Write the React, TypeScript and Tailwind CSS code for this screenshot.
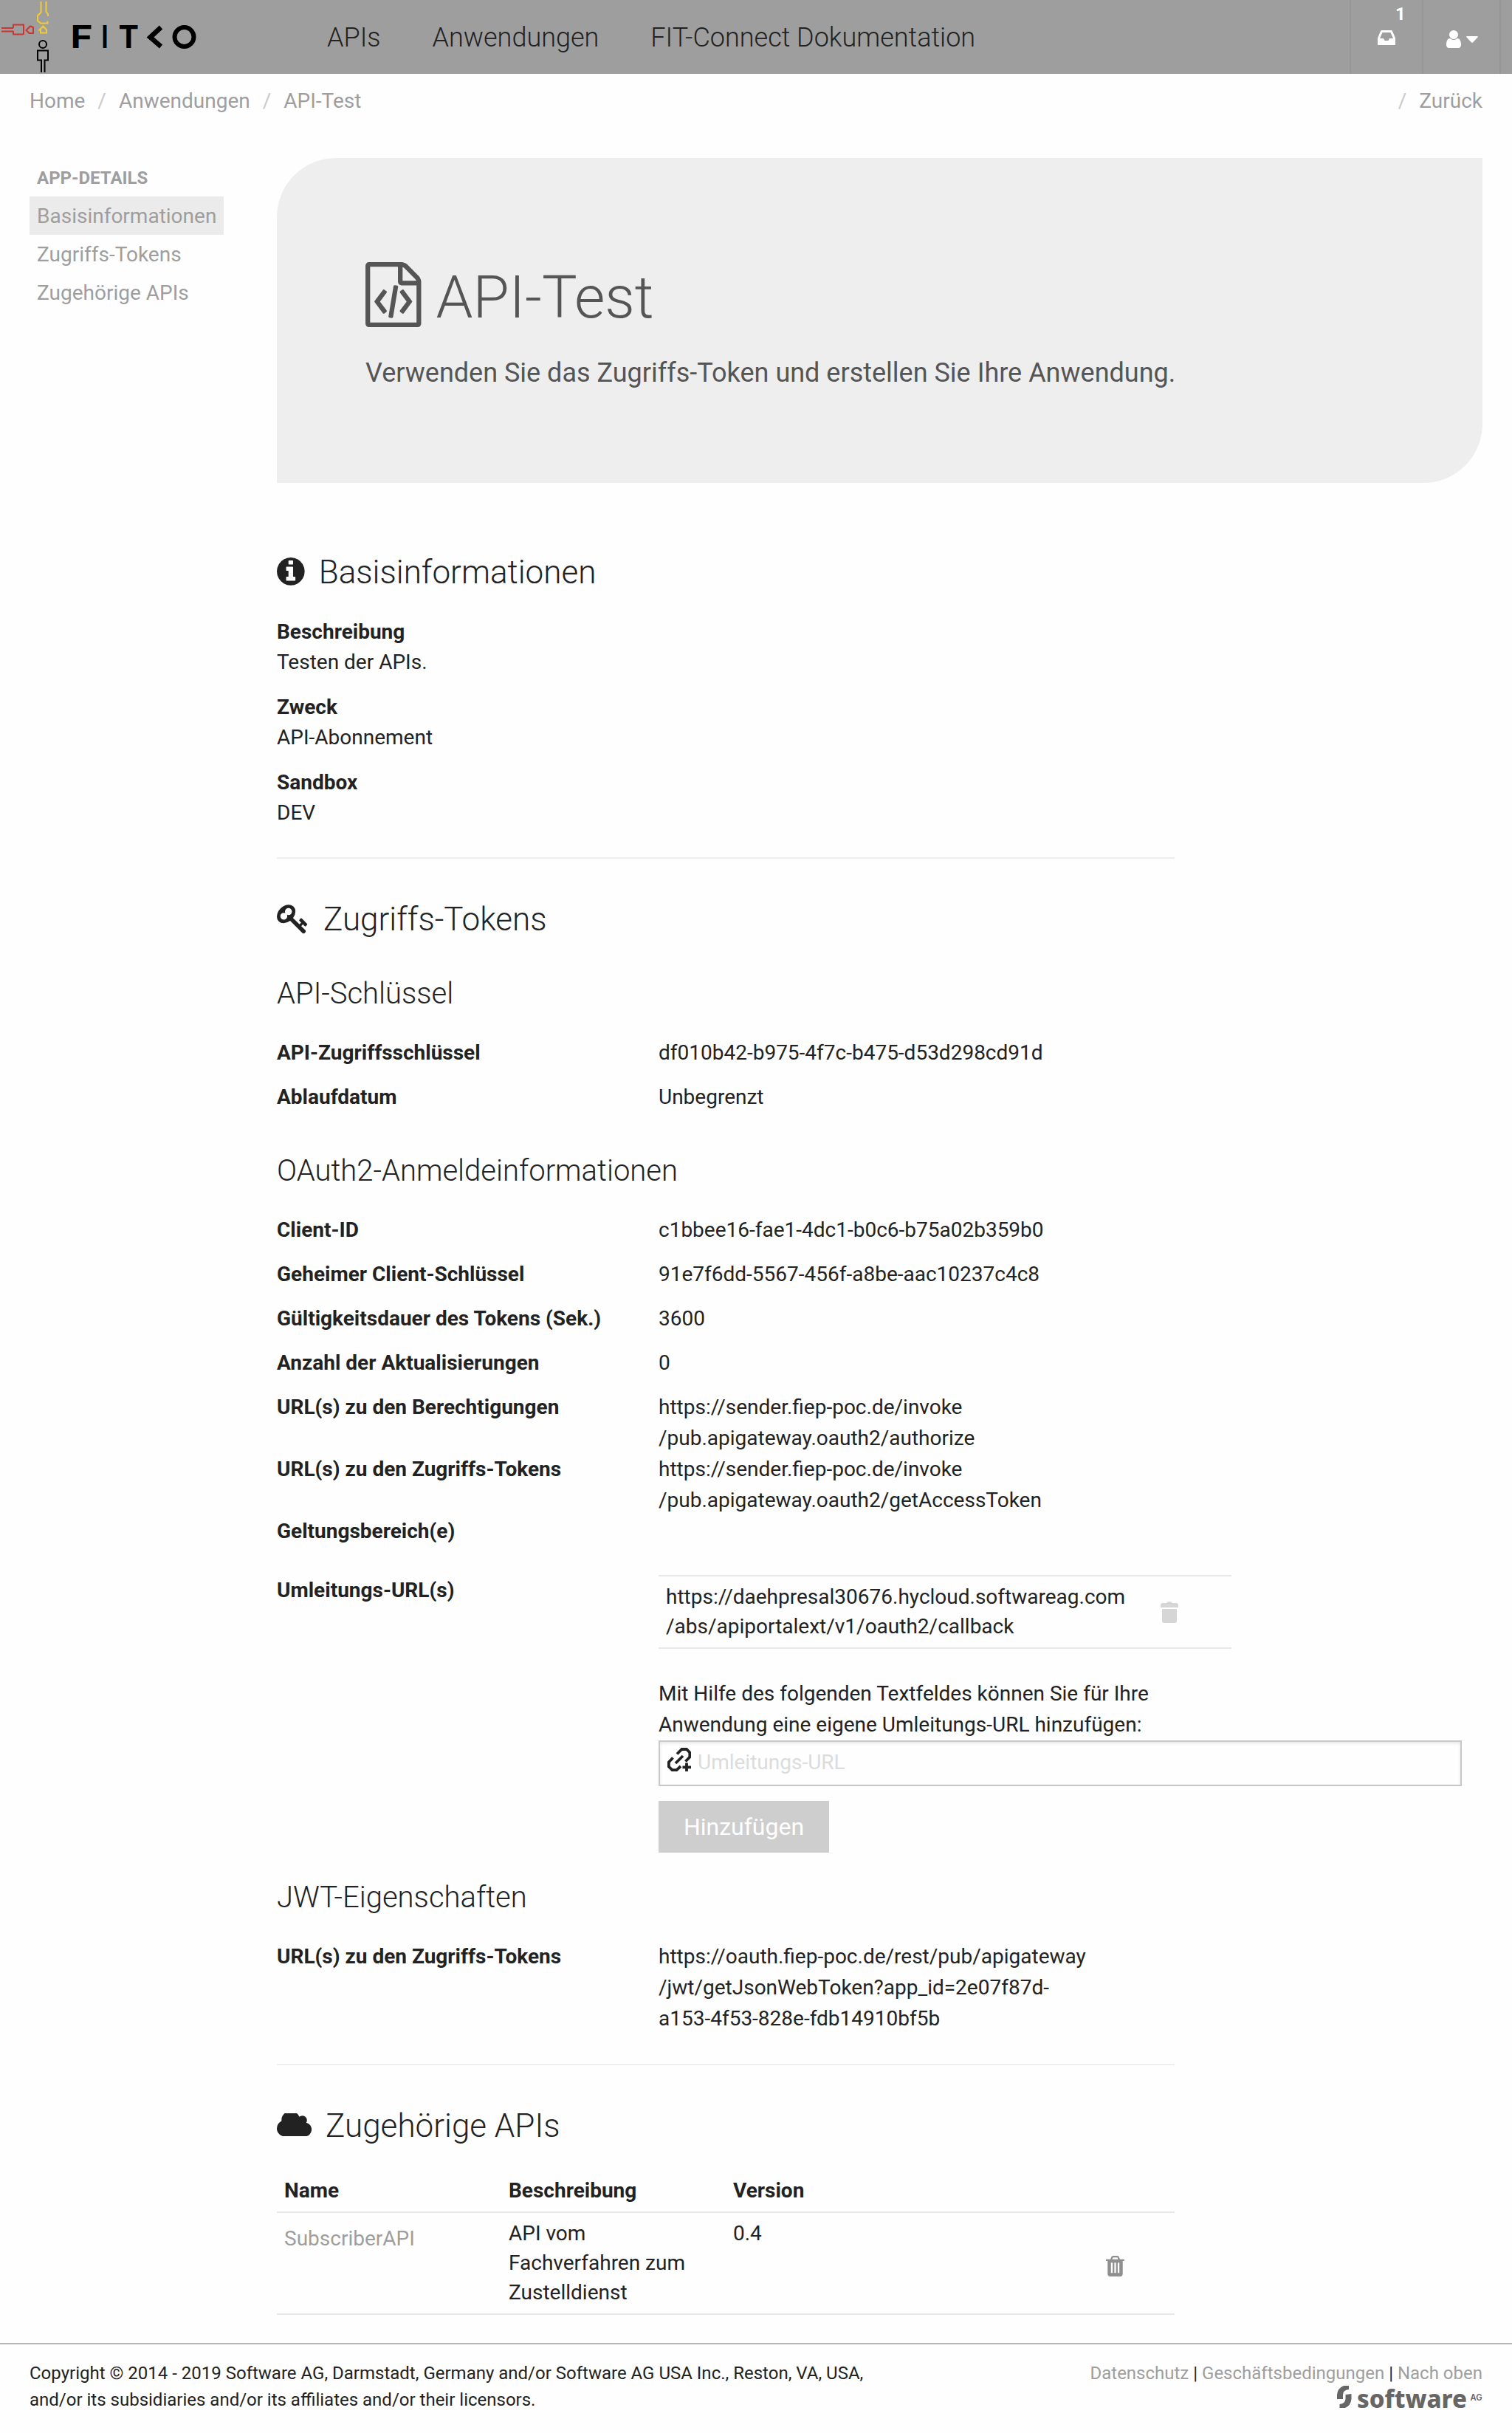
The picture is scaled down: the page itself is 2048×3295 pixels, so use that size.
import type { ReactNode } from "react";

const INFO =
  "M1152 1376v-160q0-14-9-23t-23-9h-96v-512q0-14-9-23t-23-9h-320q-14 0-23 9t-9 23v160q0 14 9 23t23 9h96v320h-96q-14 0-23 9t-9 23v160q0 14 9 23t23 9h448q14 0 23-9t9-23zm-128-896v-160q0-14-9-23t-23-9h-192q-14 0-23 9t-9 23v160q0 14 9 23t23 9h192q14 0 23-9t9-23zm640 416q0 209-103 385.5t-279.5 279.5-385.5 103-385.5-103-279.5-279.5-103-385.5 103-385.5 279.5-279.5 385.5-103 385.5 103 279.5 279.5 103 385.5z";
const KEY =
  "M832 512q0-80-56-136t-136-56-136 56-56 136q0 42 19 83-41-19-83-19-80 0-136 56t-56 136 56 136 136 56 136-56 56-136q0-42-19-83 41 19 83 19 80 0 136-56t56-136zm851 704q0 17-49 66t-66 49q-9 0-28.5-16t-36.5-33-38.5-40-24.5-26l-96 96 220 220q28 28 28 68 0 42-39 81t-81 39q-40 0-68-28l-671-671q-176 131-365 131-163 0-265.5-102.5t-102.5-265.5q0-160 95-313t248-248 313-95q163 0 265.5 102.5t102.5 265.5q0 189-131 365l355 355 96-96q-3-3-26-24.5t-40-38.5-33-36.5-16-28.5q0-17 49-66t66-49q13 0 23 10 6 6 46 44.5t82 79.5 86.5 86 73 78 28.5 41z";
const CLOUD =
  "M1984 1152q0 159-112.5 271.5t-271.5 112.5h-1088q-185 0-316.5-131.5t-131.5-316.5q0-132 71-241.5t187-163.5q-2-28-2-43 0-212 150-362t362-150q158 0 286.5 88t187.5 230q70-62 166-62 106 0 181 75t75 181q0 75-41 138 129 30 213 134.5t84 239.5z";
const FILE_CODE =
  "M1468 380q28 28 48 76t20 88v1152q0 40-28 68t-68 28h-1344q-40 0-68-28t-28-68v-1600q0-40 28-68t68-28h896q40 0 88 20t76 48zm-444-244v376h376q-10-29-22-41l-313-313q-12-12-41-22zm384 1528v-1024h-416q-40 0-68-28t-28-68v-416h-768v1536h1280zm-928-896q8-11 21-12.5t24 6.5l51 38q11 8 12.5 21t-6.5 24l-182 243 182 243q8 11 6.5 24t-12.5 21l-51 38q-11 8-24 6.5t-21-12.5l-226-301q-14-19 0-38zm802 301q14 19 0 38l-226 301q-8 11-21 12.5t-24-6.5l-51-38q-11-8-12.5-21t6.5-24l182-243-182-243q-8-11-6.5-24t12.5-21l51-38q11-8 24-6.5t21 12.5zm-620 461q-13-2-20.5-13t-5.5-24l138-831q2-13 13-20.5t24-5.5l63 10q13 2 20.5 13t5.5 24l-138 831q-2 13-13 20.5t-24 5.5z";
const INBOX =
  "M1151 960h316q-1-3-2.5-8t-2.5-8l-212-496h-708l-212 496q-1 2-2.5 8t-2.5 8h316l95 192h320zm513 30v482q0 26-19 45t-45 19h-1408q-26 0-45-19t-19-45v-482q0-62 25-123l238-552q10-25 36.5-42t52.5-17h832q26 0 52.5 17t36.5 42l238 552q25 61 25 123z";
const USER =
  "M1536 1399q0 109-62.5 187t-150.5 78h-854q-88 0-150.5-78t-62.5-187q0-85 8.5-160.5t31.5-152 58.5-131 94-89 134.5-34.5q131 128 313 128t313-128q76 0 134.5 34.5t94 89 58.5 131 31.5 152 8.5 160.5zm-256-887q0 159-112.5 271.5t-271.5 112.5-271.5-112.5-112.5-271.5 112.5-271.5 271.5-112.5 271.5 112.5 112.5 271.5z";
const TRASH =
  "M704 1376v-704q0-14-9-23t-23-9h-64q-14 0-23 9t-9 23v704q0 14 9 23t23 9h64q14 0 23-9t9-23zm256 0v-704q0-14-9-23t-23-9h-64q-14 0-23 9t-9 23v704q0 14 9 23t23 9h64q14 0 23-9t9-23zm256 0v-704q0-14-9-23t-23-9h-64q-14 0-23 9t-9 23v704q0 14 9 23t23 9h64q14 0 23-9t9-23zm-544-992h448l-48-117q-7-9-17-11h-317q-10 2-17 11zm928 32v64q0 14-9 23t-23 9h-96v948q0 83-47 143.5t-113 60.5h-832q-66 0-113-58.5t-47-141.5v-952h-96q-14 0-23-9t-9-23v-64q0-14 9-23t23-9h309l70-167q15-37 54-63t79-26h320q40 0 79 26t54 63l70 167h309q14 0 23 9t9 23z";

function FitkoLogo() {
  return (
    <svg viewBox="0 0 270 100" className="h-[100px] w-[270px]" fill="none" strokeWidth="2">
      <g stroke="#c8372f">
        <path d="M2 38H18M2 42.500H18" />
        <path d="M18 42V46.500H31V47M18 38V33.500H32V47" />
        <path d="M35.500 41L41 35.500L45 37V45H39.500Z" />
      </g>
      <g stroke="#efcb3a">
        <path d="M55.500 2V17L51 21V28L55 31.500H64.500V28.500M62.500 2V16L65 19V22" />
        <path d="M53.500 40.500L58.500 35.500L63 40.500V44.500H55V40.500Z" />
      </g>
      <g stroke="#000">
        <circle cx="58" cy="60" r="5" />
        <path d="M56 98V81.500H51V68.500H65V81.500H60.500V98" />
      </g>
      <g fill="#000" fontFamily="Inter" fontWeight="700" fontSize="42.600">
        <text x="95.500" y="65" textLength="30" lengthAdjust="spacingAndGlyphs">F</text>
        <text x="160.500" y="65" textLength="27.500" lengthAdjust="spacingAndGlyphs">T</text>
        <text x="137.500" y="65" textLength="9" lengthAdjust="spacingAndGlyphs">I</text>
      </g>
      <path d="M218 37L203.500 50.500L218 63" stroke="#000" strokeWidth="6.500" />
      <circle cx="249.500" cy="50" r="13" stroke="#000" strokeWidth="6" />
    </svg>
  );
}

function SoftwareAgLogo() {
  return (
    <svg viewBox="0 0 197 44" className="-mt-px block h-[44px] w-[197px] overflow-visible" fill="#666">
      <path d="M0 18V12Q1 3 9 0H16V5Q8 6 8 12V18Z" />
      <path d="M19.500 11V18Q18.500 27 11 30H3.500V25Q11 24 11.500 18V12Z" />
      <text x="27" y="29.500" fontFamily="'Noto Sans'" fontWeight="800" fontSize="34" textLength="149" lengthAdjust="spacingAndGlyphs">
        software
      </text>
      <text x="180.500" y="20" fontFamily="Inter" fontWeight="600" fontSize="11.500" textLength="16" lengthAdjust="spacingAndGlyphs">
        AG
      </text>
    </svg>
  );
}

function Header() {
  return (
    <header className="flex h-[100px] bg-[#9e9e9e]">
      <FitkoLogo />
      <nav className="ml-[173px] flex gap-[70px] text-[36px] leading-[102px] font-light">
        <a>APIs</a>
        <a>Anwendungen</a>
        <a>FIT-Connect Dokumentation</a>
      </nav>
      <div className="ml-auto flex text-white">
        <div className="relative flex w-[98px] justify-center border-l-2 border-[#969696]">
          <svg viewBox="128 256 1536 1280" className="mt-[41px] h-5 w-6" fill="currentColor">
            <path d={INBOX} />
          </svg>
          <span className="absolute top-[5px] left-[60px] text-[24px] leading-7 font-bold">1</span>
        </div>
        <div className="flex w-[105px] border-l-2 border-[#969696] pl-[31px]">
          <svg viewBox="256 128 1280 1536" className="mt-[41px] h-6 w-5" fill="currentColor">
            <path d={USER} />
          </svg>
          <svg viewBox="0 0 16 9" className="mt-[49px] ml-[7px] h-[9px] w-4" fill="currentColor">
            <path d="M1 0H15Q16.500 .5 15.500 1.500L9 8.400Q8 9.300 7 8.400L.5 1.500Q-.5 .5 1 0Z" />
          </svg>
        </div>
        <div className="w-[17px] border-l-2 border-[#969696]" />
      </div>
    </header>
  );
}

function Slash() {
  return <span className="text-[#cacaca]">/</span>;
}

function SectionTitle({ viewBox, path, size, children }: { viewBox: string; path: string; size: string; children: ReactNode }) {
  return (
    <h2 className="flex h-[60px] gap-[19px] text-[44px] leading-[60px] font-light">
      <svg viewBox={viewBox} className={size} fill="currentColor">
        <path d={path} />
      </svg>
      {children}
    </h2>
  );
}

function SubTitle({ children }: { children: ReactNode }) {
  return <h3 className="mb-8 text-[40px] leading-[55px] font-light">{children}</h3>;
}

function Row({ label, tight, children }: { label: string; tight?: boolean; children?: ReactNode }) {
  return (
    <div className={tight ? "flex" : "mb-[18px] flex"}>
      <div className="w-[517px] font-bold">{label}</div>
      <div className="flex-1">{children}</div>
    </div>
  );
}

const facts = [
  ["Beschreibung", "Testen der APIs."],
  ["Zweck", "API-Abonnement"],
  ["Sandbox", "DEV"],
];

export default function App() {
  return (
    <div className="h-[3295px] w-[2048px] bg-[#fefefe] font-['Roboto',sans-serif] text-[28px] leading-[42px] text-[#222]">
      <Header />
      <div className="flex h-[73px] gap-[17px] px-10 leading-[73px] text-[#9e9e9e]">
        <a>Home</a>
        <Slash />
        <a>Anwendungen</a>
        <Slash />
        <a>API-Test</a>
        <span className="ml-auto">
          <Slash />
        </span>
        <a>Zurück</a>
      </div>

      <div className="flex h-[3000px] pr-10 pl-10">
        <aside className="w-[335px] pt-[50px] text-[#9e9e9e]">
          <div className="mb-[7px] pl-[10px] text-[24px] leading-9 font-bold">APP-DETAILS</div>
          <ul className="leading-[54px]">
            <li className="h-[52px] w-fit bg-[#ebebeb] px-[10px]">Basisinformationen</li>
            <li className="h-[52px] px-[10px]">Zugriffs-Tokens</li>
            <li className="h-[52px] px-[10px]">Zugehörige APIs</li>
          </ul>
        </aside>

        <main className="flex-1 pt-[41px]">
          <section className="h-[440px] rounded-tl-[80px] rounded-br-[80px] bg-[#eeeeee] pt-[140px] pl-[120px] text-[#555]">
            <h1 className="flex h-[90px] gap-5 text-[80px] leading-[98px] font-light">
              <svg viewBox="0 0 1536 1792" className="mt-px h-[88px] w-[75.500px]" fill="currentColor">
                <path d={FILE_CODE} />
              </svg>
              API-Test
            </h1>
            <p className="mt-[34px] text-[36px] leading-[54px]">Verwenden Sie das Zugriffs-Token und erstellen Sie Ihre Anwendung.</p>
          </section>

          <section className="mt-[91px] w-[1216px] border-b-2 border-[#eee] pb-10">
            <SectionTitle viewBox="128 128 1536 1536" path={INFO} size="mt-[10px] h-[37.700px] w-[37.700px]">
              Basisinformationen
            </SectionTitle>
            <dl className="mt-[30px] flex flex-col gap-5 leading-[41px]">
              {facts.map(([k, v]) => (
                <div key={k}>
                  <dt className="font-bold">{k}</dt>
                  <dd>{v}</dd>
                </div>
              ))}
            </dl>
          </section>

          <section className="mt-[52px] w-[1216px] border-b-2 border-[#eee] pb-10">
            <SectionTitle viewBox="0 0 1792 1792" path={KEY} size="mt-[7px] h-11 w-11">
              Zugriffs-Tokens
            </SectionTitle>
            <div className="mt-[43px]">
              <SubTitle>API-Schlüssel</SubTitle>
              <Row label="API-Zugriffsschlüssel">df010b42-b975-4f7c-b475-d53d298cd91d</Row>
              <Row label="Ablaufdatum">Unbegrenzt</Row>
            </div>
            <div className="mt-[51px]">
              <SubTitle>OAuth2-Anmeldeinformationen</SubTitle>
              <Row label="Client-ID">c1bbee16-fae1-4dc1-b0c6-b75a02b359b0</Row>
              <Row label="Geheimer Client-Schlüssel">91e7f6dd-5567-456f-a8be-aac10237c4c8</Row>
              <Row label="Gültigkeitsdauer des Tokens (Sek.)">3600</Row>
              <Row label="Anzahl der Aktualisierungen">0</Row>
              <Row label="URL(s) zu den Berechtigungen" tight>
                https://sender.fiep-poc.de/invoke
                <br />
                /pub.apigateway.oauth2/authorize
              </Row>
              <Row label="URL(s) zu den Zugriffs-Tokens" tight>
                https://sender.fiep-poc.de/invoke
                <br />
                /pub.apigateway.oauth2/getAccessToken
              </Row>
              <Row label="Geltungsbereich(e)" tight />
            </div>
            <div className="mt-[38px] flex">
              <div className="w-[517px] shrink-0 font-bold">Umleitungs-URL(s)</div>
              <div className="shrink-0">
                <div className="flex w-[776px] border-y-2 border-[#e8e8e8] py-2 pl-[10px] leading-10">
                  <div className="w-[670px]">
                    https://daehpresal30676.hycloud.softwareag.com
                    <br />
                    /abs/apiportalext/v1/oauth2/callback
                  </div>
                  <svg viewBox="0 0 24 29" className="mt-[26px] h-[29px] w-6" fill="#d6d6d6">
                    <path d="M0 8V5Q0 2 3 2H8Q9 0 12 0T16 2H21Q24 2 24 5V8Z" />
                    <path d="M2 10H22V26Q22 29 19 29H5Q2 29 2 26Z" />
                  </svg>
                </div>
                <p className="mt-10">
                  Mit Hilfe des folgenden Textfeldes können Sie für Ihre
                  <br />
                  Anwendung eine eigene Umleitungs-URL hinzufügen:
                </p>
                <div className="flex h-[62px] w-[1088px] border-2 border-[#c8c8c8] bg-[#fefefe] pl-[10px] leading-[56px] text-[#dcdcdc] shadow-[inset_0_2px_4px_rgba(10,10,10,0.1)]">
                  <svg viewBox="0 0 32 32" className="mt-2 mr-[9px] h-8 w-8" fill="none" stroke="#222" strokeWidth="3.800">
                    <path d="M13 8.500L19.500 2H26L30.300 6.500V12.500L24.500 18.500" />
                    <path d="M7.500 13.500L1.900 19.500V25.500L6.500 30.100H12.500L18 25" />
                    <path d="M11 21L21 11" />
                    <path d="M26 20.500V32M20.500 26.300H32" />
                  </svg>
                  Umleitungs-URL
                </div>
                <button className="mt-5 block h-[70px] w-[231px] bg-[#cecece] text-center align-top text-[32px] leading-[68px] text-white">
                  Hinzufügen
                </button>
              </div>
            </div>
            <div className="mt-[33px]">
              <SubTitle>JWT-Eigenschaften</SubTitle>
              <Row label="URL(s) zu den Zugriffs-Tokens" tight>
                https://oauth.fiep-poc.de/rest/pub/apigateway
                <br />
                /jwt/getJsonWebToken?app_id=2e07f87d-
                <br />
                a153-4f53-828e-fdb14910bf5b
              </Row>
            </div>
          </section>

          <section className="mt-[52px] w-[1216px]">
            <SectionTitle viewBox="64 256 1920 1280" path={CLOUD} size="mt-[13px] h-[31.400px] w-[47.100px]">
              Zugehörige APIs
            </SectionTitle>
            <div className="mt-[38px] grid grid-cols-4 border-b-2 border-[#e8e8e8] pb-2 leading-10 font-bold">
              <div className="pl-[10px]">Name</div>
              <div className="pl-[10px]">Beschreibung</div>
              <div className="pl-[10px]">Version</div>
            </div>
            <div className="grid grid-cols-4 border-b-2 border-[#e8e8e8] py-2 leading-10">
              <div className="pt-[7px] pl-[10px] text-[#9e9e9e]">SubscriberAPI</div>
              <div className="pl-[10px]">
                API vom
                <br />
                Fachverfahren zum
                <br />
                Zustelldienst
              </div>
              <div className="pl-[10px]">0.4</div>
              <svg viewBox="192 128 1408 1536" className="mt-[50px] ml-[211px] h-7 w-[25px]" preserveAspectRatio="none" fill="#8f8f8f">
                <path d={TRASH} />
              </svg>
            </div>
          </section>
        </main>
      </div>

      <footer className="flex h-[122px] justify-between border-t-2 border-[#b6b6b6] px-10 pt-[21px] text-[24px] leading-9">
        <p>
          Copyright © 2014 - 2019 Software AG, Darmstadt, Germany and/or Software AG USA Inc., Reston, VA, USA,
          <br />
          and/or its subsidiaries and/or its affiliates and/or their licensors.
        </p>
        <div className="flex flex-col items-end">
          <div>
            <a className="text-[#9e9e9e]">Datenschutz</a> | <a className="text-[#9e9e9e]">Geschäftsbedingungen</a> |{" "}
            <a className="text-[#9e9e9e]">Nach oben</a>
          </div>
          <SoftwareAgLogo />
        </div>
      </footer>
    </div>
  );
}
